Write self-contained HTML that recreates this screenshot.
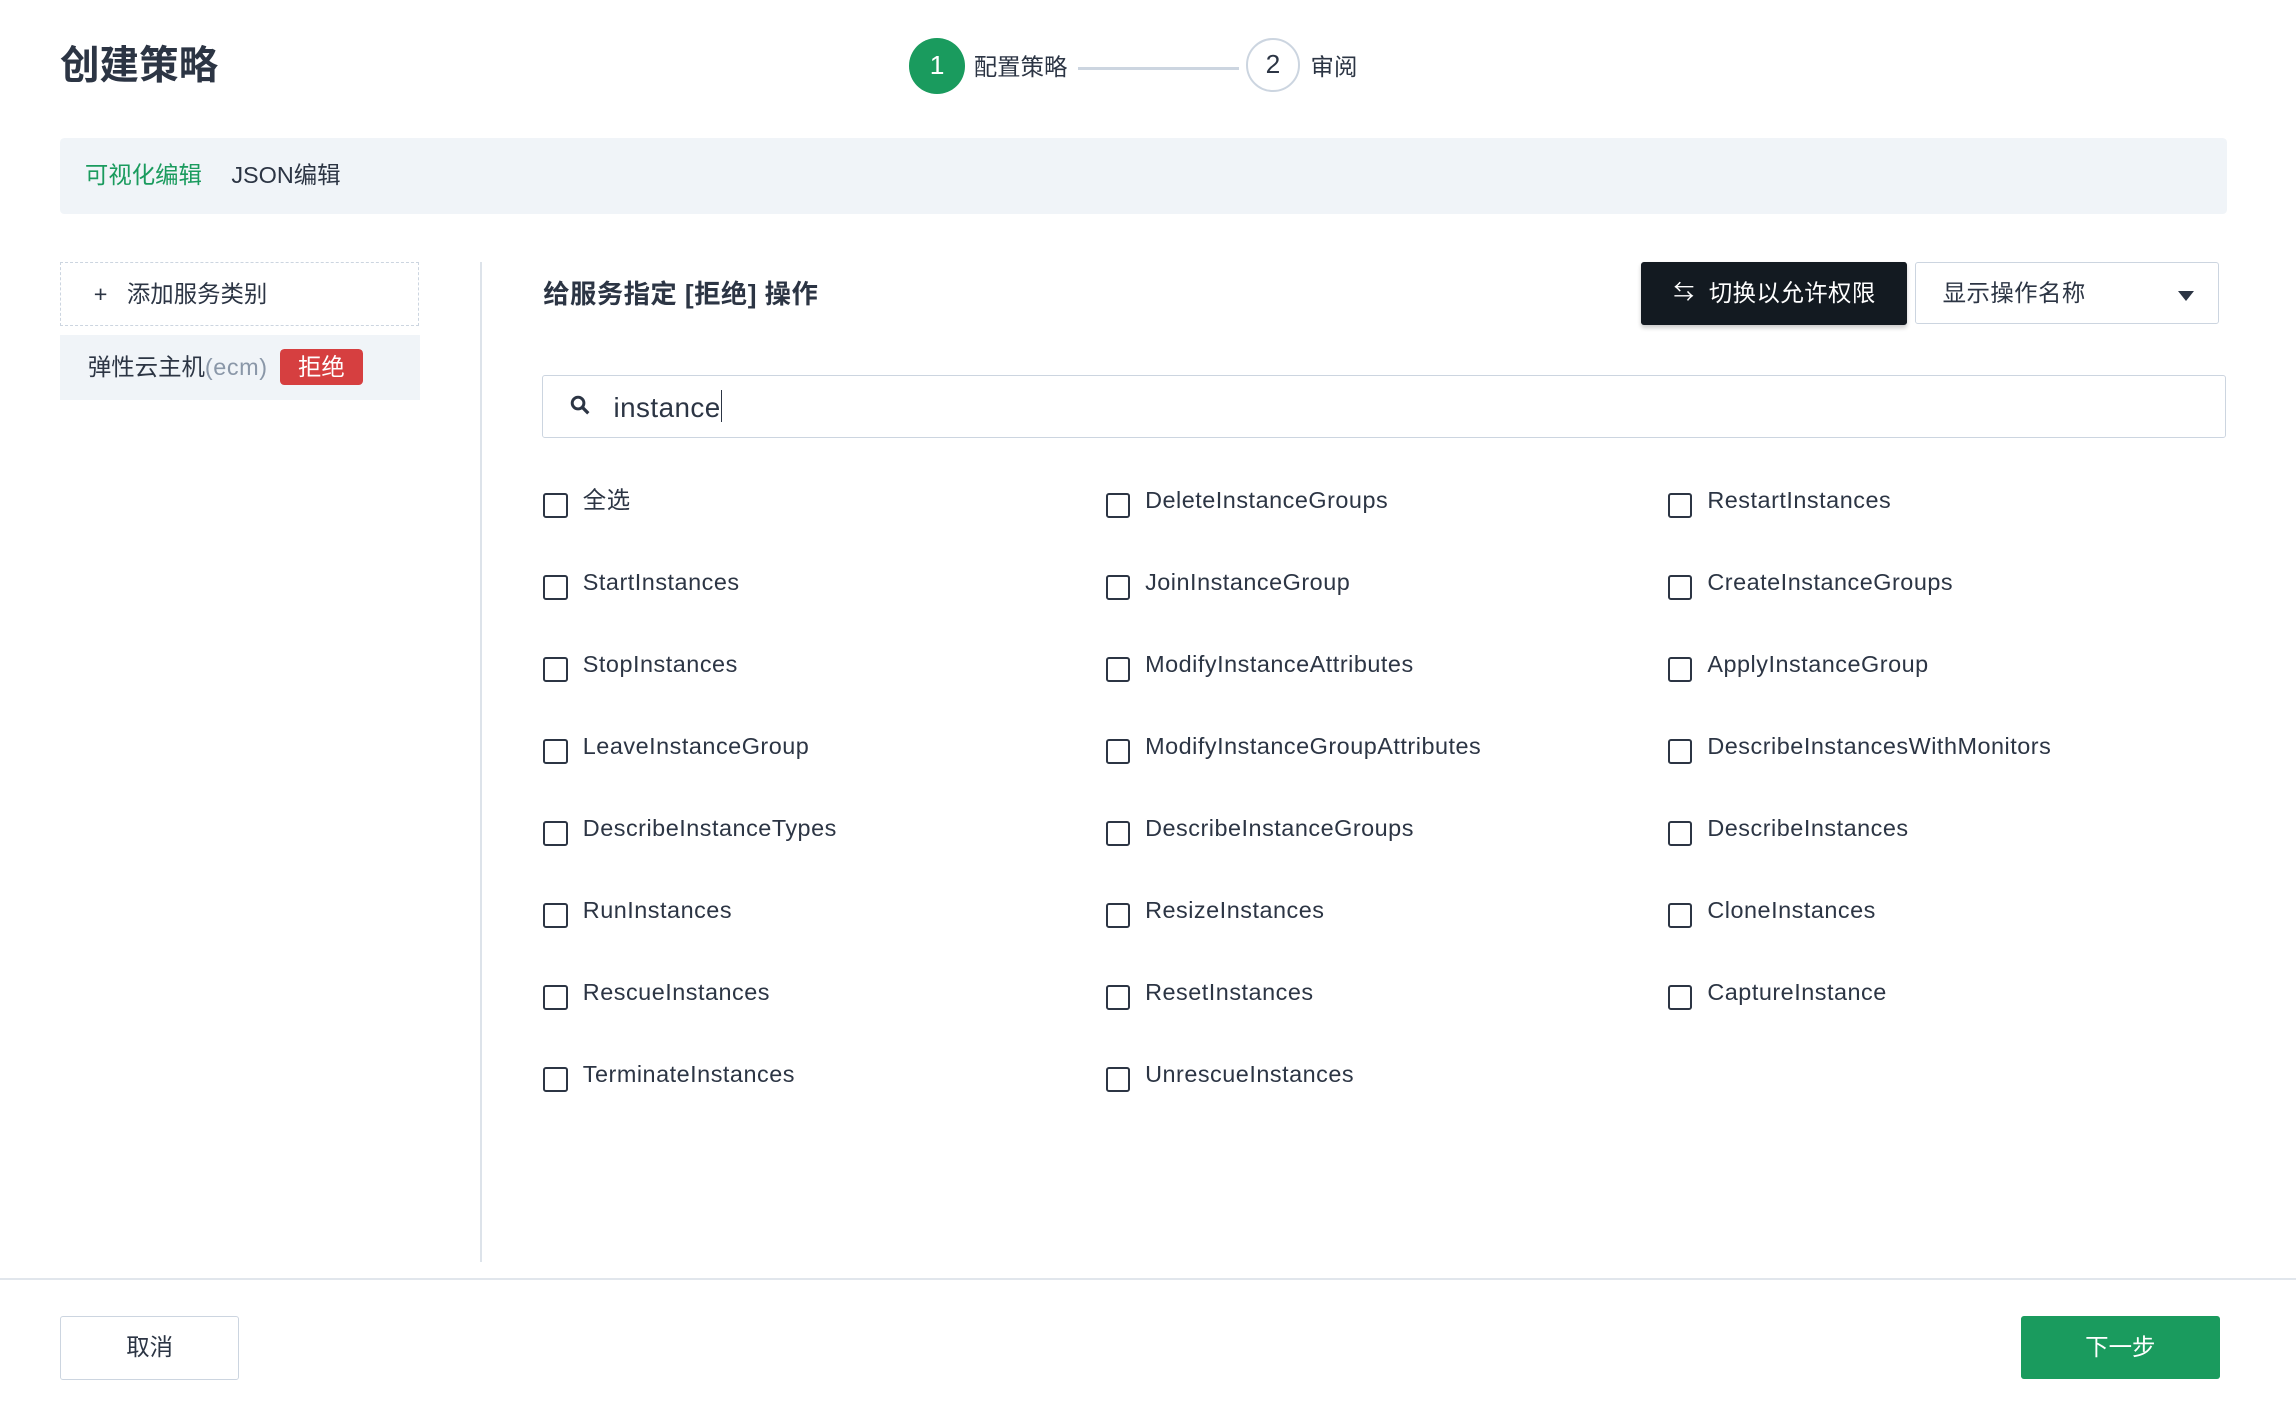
<!DOCTYPE html>
<html><head><meta charset="utf-8"><style>
html,body{margin:0;padding:0;background:#fff;overflow:hidden}
body{width:2296px;height:1410px;font-family:"Liberation Sans","Noto Sans CJK SC",sans-serif;color:#2c3544}
#r{position:relative;width:1568px;height:963px;zoom:1.46429}
.a{position:absolute}
.cb{position:absolute;width:14px;height:14px;border:1.5px solid #2c3544;border-radius:2px;background:#fff}
.lb{position:absolute;font-size:16px;line-height:20px;white-space:nowrap;letter-spacing:0.35px}
</style></head><body><div id="r">
<div class="a" style="left:41px;top:27px;font-size:27px;font-weight:bold;line-height:36px">创建策略</div>
<div class="a" style="left:621px;top:26px;width:38px;height:38px;border-radius:50%;background:#1a9b5e;color:#fff;font-size:18px;line-height:38px;text-align:center">1</div>
<div class="a" style="left:665px;top:36px;font-size:16px;line-height:20px">配置策略</div>
<div class="a" style="left:736px;top:46px;width:110px;height:2px;background:#ccd5e0"></div>
<div class="a" style="left:851px;top:26px;width:34px;height:34px;border:2px solid #ccd5e0;border-radius:50%;font-size:18px;line-height:34px;text-align:center">2</div>
<div class="a" style="left:895px;top:36px;font-size:16px;line-height:20px">审阅</div>
<div class="a" style="left:41px;top:94px;width:1480px;height:52px;background:#f0f4f8;border-radius:3px"></div>
<div class="a" style="left:58px;top:110px;font-size:16px;line-height:20px;color:#1a9b5e">可视化编辑</div>
<div class="a" style="left:158px;top:110px;font-size:16px;line-height:20px">JSON编辑</div>
<div class="a" style="left:41px;top:179px;width:244px;height:42px;border:1px dashed #ccd5e0"></div>
<div class="a" style="left:64px;top:191px;font-size:16px;line-height:20px">+&nbsp;&nbsp;&nbsp;添加服务类别</div>
<div class="a" style="left:41px;top:229px;width:246px;height:44px;background:#f0f4f8"></div>
<div class="a" style="left:60px;top:241px;font-size:16px;line-height:20px">弹性云主机<span style="color:#8a97a8;letter-spacing:0.4px">(ecm)</span></div>
<div class="a" style="left:191px;top:238px;width:57px;height:25px;background:#d63f40;border-radius:3px;color:#fff;font-size:16px;line-height:25px;text-align:center">拒绝</div>
<div class="a" style="left:328px;top:179px;width:1px;height:683px;background:#dde3ea"></div>
<div class="a" style="left:371px;top:189px;font-size:18px;font-weight:bold;line-height:24px;letter-spacing:0.3px">给服务指定 [拒绝] 操作</div>
<div class="a" style="left:1121px;top:179px;width:181px;height:43px;background:#131a21;border-radius:2px;box-shadow:0 2px 3px rgba(0,0,0,.2);color:#fff;font-size:16px;line-height:43px"><span style="position:absolute;left:22px;font-size:14px">⇆</span><span style="position:absolute;left:46px;letter-spacing:0.3px">切换以允许权限</span></div>
<div class="a" style="left:1308px;top:179px;width:206px;height:41px;border:1px solid #ccd5e0;border-radius:2px;font-size:16px;line-height:41px"><span style="position:absolute;left:18px;letter-spacing:0.3px">显示操作名称</span><span style="position:absolute;left:179px;top:19px;border-left:6px solid transparent;border-right:6px solid transparent;border-top:7px solid #2c3544"></span></div>
<div class="a" style="left:370px;top:256px;width:1149px;height:42px;border:1px solid #ccd5e0;border-radius:2px"></div>
<svg class="a" style="left:389px;top:270px" width="14" height="14" viewBox="0 0 14 14"><circle cx="5.5" cy="5.5" r="4" fill="none" stroke="#2c3544" stroke-width="2"/><path d="M8.5 8.5L12.5 12.5" stroke="#2c3544" stroke-width="2.2"/></svg>
<div class="a" style="left:419px;top:266px;font-size:19px;line-height:24px;letter-spacing:0.3px">instance<span style="display:inline-block;width:1px;height:22px;background:#2c3544;vertical-align:-4px"></span></div>
<div id="g"></div>
<div class="a" style="left:0;top:873px;width:1568px;height:1px;background:#e1e6ec"></div>
<div class="a" style="left:41px;top:899px;width:121px;height:42px;border:1px solid #ccd5e0;border-radius:2px;font-size:16px;line-height:42px;text-align:center">取消</div>
<div class="a" style="left:1380px;top:899px;width:136px;height:43px;background:#1a9b5e;border-radius:2px;color:#fff;font-size:16px;line-height:43px;text-align:center">下一步</div>
<script>
var c=[["全选","StartInstances","StopInstances","LeaveInstanceGroup","DescribeInstanceTypes","RunInstances","RescueInstances","TerminateInstances"],["DeleteInstanceGroups","JoinInstanceGroup","ModifyInstanceAttributes","ModifyInstanceGroupAttributes","DescribeInstanceGroups","ResizeInstances","ResetInstances","UnrescueInstances"],["RestartInstances","CreateInstanceGroups","ApplyInstanceGroup","DescribeInstancesWithMonitors","DescribeInstances","CloneInstances","CaptureInstance"]];
var xs=[371,755,1139],h="";
c.forEach(function(col,i){col.forEach(function(t,j){var y=332+j*56;h+='<div class="cb" style="left:'+xs[i]+'px;top:'+(y+5)+'px"></div><div class="lb" style="left:'+(xs[i]+27)+'px;top:'+y+'px">'+t+'</div>';});});
document.getElementById('g').innerHTML=h;
</script>
</div></body></html>
